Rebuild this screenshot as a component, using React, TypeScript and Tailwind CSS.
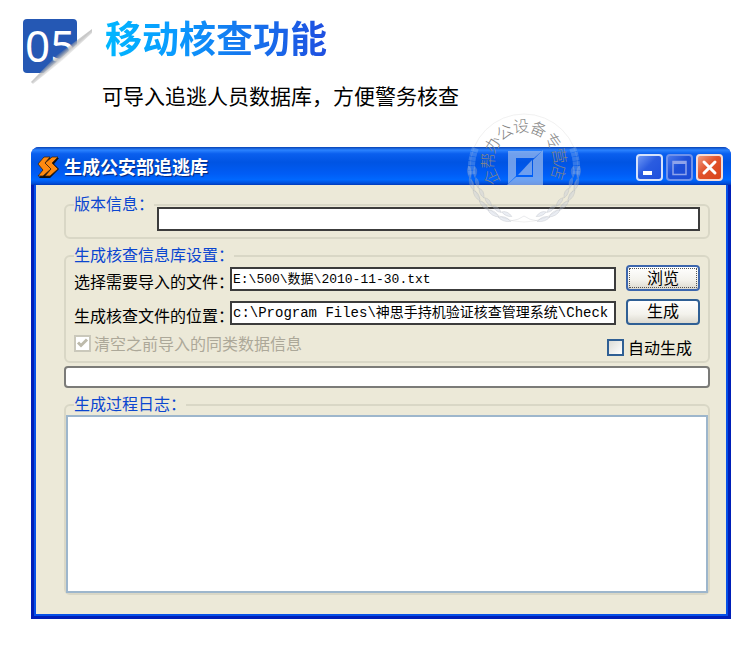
import type { ReactNode } from "react";

const sealChars = [
  { ch: "企", angle: -115 },
  { ch: "帮", angle: -88 },
  { ch: "办", angle: -60 },
  { ch: "公", angle: -33 },
  { ch: "设", angle: -5 },
  { ch: "备", angle: 24 },
  { ch: "专", angle: 54 },
  { ch: "营", angle: 80 },
  { ch: "店", angle: 106 },
];

const leafAngles = [14, 27, 40, 53, 66, 79];
const barAngles = [84, 89, 94, 99, 104, 109];

function Badge() {
  return (
    <div className="relative h-[54px] w-[54px] shrink-0 rounded-[4px] bg-[#2558b4]">
      <span className="block pl-[2px] font-['Noto_Sans','Open_Sans',sans-serif] text-[44px] leading-[52px] text-white">
        05
      </span>
      <svg
        className="absolute top-0 left-0 h-[68px] w-[76px]"
        viewBox="0 0 76 68"
        aria-hidden="true"
      >
        <defs>
          <linearGradient id="fold" gradientUnits="userSpaceOnUse" x1="35" y1="34" x2="41" y2="41">
            <stop offset="0" stopColor="#8c8c8c" stopOpacity="0" />
            <stop offset="0.5" stopColor="#b8b8b8" stopOpacity="0.8" />
            <stop offset="1" stopColor="#ffffff" />
          </linearGradient>
        </defs>
        <path d="M69 12 L76 12 L76 68 L8 68 L8 65Z" fill="#fff" />
        <path d="M69 10 L69 14 L40 41 L10 65 L8 63 L34 36Z" fill="url(#fold)" />
      </svg>
    </div>
  );
}

function Seal() {
  return (
    <svg
      className="pointer-events-none absolute top-[112px] left-[467px] h-[114px] w-[114px] overflow-visible"
      viewBox="0 0 114 114"
      aria-hidden="true"
    >
      <circle cx="57" cy="56" r="54" fill="none" stroke="#bbb" strokeOpacity="0.2" />
      <g fill="#858585">
        {sealChars.map((c) => (
          <text
            key={c.ch}
            x="57"
            y="20"
            textAnchor="middle"
            transform={`rotate(${c.angle} 57 50)`}
            className="font-['Noto_Sans_CJK_SC',sans-serif] text-[16px] font-light"
          >
            {c.ch}
          </text>
        ))}
      </g>
      <g fill="#b9c4d6" fillOpacity="0.3" stroke="#9aa0a8" strokeOpacity="0.35" strokeWidth="0.6">
        {leafAngles.map((a) => (
          <g key={a}>
            <path d="M57 111q-7 -5 -13 -1q6 4 13 1Z" transform={`rotate(${a} 57 56)`} />
            <path d="M57 106q-6 -5 -11 -2q5 4 11 2Z" transform={`rotate(${a} 57 56)`} />
            <path d="M57 111q7 -5 13 -1q-6 4 -13 1Z" transform={`rotate(${-a} 57 56)`} />
            <path d="M57 106q6 -5 11 -2q-5 4 -11 2Z" transform={`rotate(${-a} 57 56)`} />
          </g>
        ))}
        <path d="M43 109q9 -1 14 -5q5 4 14 5" fill="none" />
      </g>
      <g fill="#8fb6ee" fillOpacity="0.35">
        {barAngles.map((a) => (
          <g key={a}>
            <rect x="54" y="105" width="4" height="7" transform={`rotate(${a} 57 56)`} />
            <rect x="56" y="105" width="4" height="7" transform={`rotate(${-a} 57 56)`} />
          </g>
        ))}
      </g>
      <g fill="#9cbcec" fillOpacity="0.7">
        <path d="M41 39H75L67 46H49V64L41 72Z" />
        <path d="M76 38V73H40L49 65H66V48Z" />
        <path d="M65 48V63H51Z" />
      </g>
    </svg>
  );
}

function Group({ title, className, children }: { title: string; className: string; children: ReactNode }) {
  return (
    <fieldset className={`min-w-0 rounded-[6px] border-2 border-[#d9d7c6] ${className}`}>
      <legend className="pb-1 text-[16px] leading-[16px] text-[#0b46d0]">{title}</legend>
      {children}
    </fieldset>
  );
}

function TitleBar() {
  const button = "grid h-[27px] w-[27px] place-items-center rounded-[4px] border-2";
  return (
    <div className="flex h-[38px] items-center bg-[linear-gradient(180deg,#0842b4_0%,#2b83ff_8%,#0a5fee_18%,#0054e3_40%,#005cf5_70%,#0068ff_86%,#0050dc_95%,#0039b8_100%)] pt-[3px] pr-2 pl-[6px]">
      <svg className="h-[23px] w-[23px]" viewBox="0 0 23 23" aria-hidden="true">
        <g strokeLinejoin="round">
          <path d="M8 2H22L17 8L22 13L13 22H2L7 15L2 9Z" fill="#111" />
          <path d="M7 1H13L8 7L14 13L6 20H1L6 14L1 8Z" fill="#ff8a10" stroke="#3a2410" strokeWidth="0.8" />
          <path d="M15 1H21L15 7L21 13L13 20H8L14 13L8 7Z" fill="#ff8a10" stroke="#3a2410" strokeWidth="0.8" />
        </g>
      </svg>
      <h2 className="ml-1 flex-1 pb-[3px] text-[18px] leading-[24px] font-bold text-white [text-shadow:1px_1px_1px_#03257a]">
        生成公安部追逃库
      </h2>
      <div className="flex gap-[3px]">
        <button
          type="button"
          aria-label="最小化"
          className={`${button} border-[#d5e2fb] bg-[linear-gradient(135deg,#6d97f5,#2a5ce0_45%,#1f50dd)]`}
        >
          <svg className="h-[23px] w-[23px]" viewBox="0 0 23 23">
            <rect x="5" y="15" width="9" height="4" fill="#fff" />
          </svg>
        </button>
        <button
          type="button"
          aria-label="最大化"
          disabled
          className={`${button} border-[#6f92ea] bg-[linear-gradient(135deg,#4a78ec,#1f50d8_45%,#1b4bd6)]`}
        >
          <svg className="h-[23px] w-[23px]" viewBox="0 0 23 23" fill="none" stroke="#8fa3ea">
            <path d="M5 5.500H18V18.500H5Z" strokeWidth="1.5" />
            <path d="M5 6.500H18" strokeWidth="3" />
          </svg>
        </button>
        <button
          type="button"
          aria-label="关闭"
          className={`${button} border-[#f6dcd5] bg-[linear-gradient(135deg,#f09a80,#e1532c_45%,#d8431a)]`}
        >
          <svg className="h-[23px] w-[23px]" viewBox="0 0 23 23" fill="none" stroke="#fff" strokeWidth="3" strokeLinecap="round">
            <path d="M6 6L17 17M17 6L6 17" />
          </svg>
        </button>
      </div>
    </div>
  );
}

export default function App() {
  const field = "h-[24px] w-full min-w-0 border-2 border-[#3c3c3c] bg-white text-black outline-none";
  const mono = "font-['Liberation_Mono','Noto_Sans_CJK_SC',monospace]";
  const action =
    "h-[26px] rounded-[4px] border-2 bg-[linear-gradient(180deg,#ffffff,#f3f2ec_60%,#dcd9cf)] text-[16px] text-black";

  return (
    <main className="relative min-h-screen bg-white pb-9 font-['Noto_Sans_CJK_SC',sans-serif]">
      <header className="pt-[19px] pl-[23px]">
        <div className="flex gap-7">
          <Badge />
          <h1 className="bg-[linear-gradient(90deg,#00b7ff_0%,#0a9cff_30%,#1479f0_60%,#1f4fe0_100%)] bg-clip-text text-[37px] leading-[36px] font-bold text-transparent">
            移动核查功能
          </h1>
        </div>
        <p className="mt-2 pl-[79px] text-[21px] leading-[28px] text-black">
          可导入追逃人员数据库，方便警务核查
        </p>
      </header>

      <section className="mt-[38px] mr-[19px] ml-[31px] overflow-hidden rounded-t-[8px] bg-[#0a3fd8]">
        <TitleBar />
        <div className="border-x-[3px] border-b-[3px] border-[#001fb8]">
          <div className="border-x-2 border-b-2 border-[#0650e8] bg-[#ece9d8] pt-[10px] pr-4 pb-[19px] pl-7">
            <Group title="版本信息：" className="pr-2 pb-[6px] pl-2">
              <div className="-mt-2 pl-[83px]">
                <input type="text" aria-label="版本信息" className={`${field} block`} />
              </div>
            </Group>

            <Group title="生成核查信息库设置：" className="mt-[7px] px-2 pb-1">
              <div className="-mt-px grid grid-cols-[156px_1fr_74px] items-end gap-y-2 text-[16px] leading-[20px] text-black">
                <label htmlFor="source" className="whitespace-nowrap">选择需要导入的文件：</label>
                <div className="pr-[10px]">
                  <input
                    id="source"
                    type="text"
                    defaultValue="E:\500\数据\2010-11-30.txt"
                    className={`${field} ${mono} block px-px pb-1 text-[13px]`}
                  />
                </div>
                <button type="button" className={`${action} border-[#3c66ad] p-px leading-[16px]`}>
                  <span className="block h-full border border-dotted border-[#555]">浏览</span>
                </button>

                <label htmlFor="target" className="whitespace-nowrap">生成核查文件的位置：</label>
                <div className="pr-[10px]">
                  <input
                    id="target"
                    type="text"
                    defaultValue="c:\Program Files\神思手持机验证核查管理系统\Check"
                    className={`${field} ${mono} block px-px pb-1 text-[14px]`}
                  />
                </div>
                <button type="button" className={`${action} border-[#2f5f94] pb-1 leading-[18px]`}>
                  生成
                </button>
              </div>

              <div className="mt-2 flex h-[24px] justify-between text-[16px] leading-[20px]">
                <label className="flex items-center gap-[3px] self-start text-[#aca899]">
                  <span className="relative h-[17px] w-[17px]">
                    <input
                      type="checkbox"
                      defaultChecked
                      disabled
                      className="block h-[17px] w-[17px] appearance-none border-2 border-[#cac8bb] bg-white"
                    />
                    <svg className="absolute top-0 left-0 h-[17px] w-[17px]" viewBox="0 0 17 17" fill="none" stroke="#bdbaab" strokeWidth="3">
                      <path d="M4 7.500L7 10.500L13 4.500" />
                    </svg>
                  </span>
                  清空之前导入的同类数据信息
                </label>
                <label className="flex items-center gap-1 self-end pr-2 text-black">
                  <input
                    type="checkbox"
                    className="h-[17px] w-[17px] appearance-none border-2 border-[#2f5f94] bg-[linear-gradient(135deg,#dcdcd7,#ffffff)]"
                  />
                  自动生成
                </label>
              </div>
            </Group>

            <div
              role="progressbar"
              aria-label="生成进度"
              className="mt-[3px] h-[22px] rounded-[4px] border-2 border-[#7b7b78] bg-white"
            />

            <Group title="生成过程日志：" className="mt-[7px] [&>legend]:ml-2">
              <textarea
                aria-label="生成过程日志"
                className="block h-[178px] w-full resize-none border-2 border-[#9db6cc] bg-white p-1 text-[14px] outline-none"
              />
            </Group>
          </div>
        </div>
      </section>

      <Seal />
    </main>
  );
}
